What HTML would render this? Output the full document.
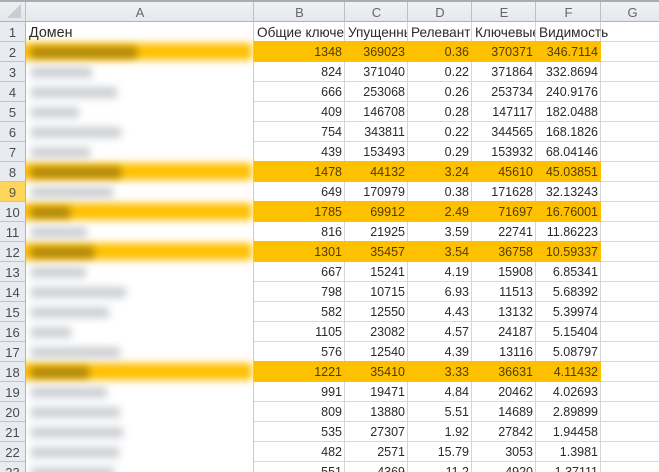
<!DOCTYPE html>
<html><head><meta charset="utf-8"><style>
html,body{margin:0;padding:0;background:#fff;width:659px;height:472px;overflow:hidden}
body{position:relative;font-family:"Liberation Sans",sans-serif;font-size:12.5px;color:#2a2a2a}
#top{position:absolute;left:0;top:0;width:659px;height:2px;background:#a9adb2}
#wrap{position:absolute;left:0;top:0;width:659px;height:472px;overflow:hidden}
table{position:absolute;left:0;top:2px;border-collapse:separate;border-spacing:0;table-layout:fixed;width:663px;filter:blur(.3px)}
tr{height:20px}
td,th{box-sizing:border-box;height:20px;padding:2px 2px 0 3px;border-right:1px solid #d6d6d6;border-bottom:1px solid #d9d9d9;white-space:nowrap;overflow:hidden;text-align:right;font-weight:normal;line-height:17px}
thead th{height:20px;background:linear-gradient(#eff2f5,#e4e8ec);border-right:1px solid #bcc0c5;border-bottom:1px solid #b0b4ba;text-align:center;color:#666;font-size:13px;line-height:17px}
th.r{background:#e8ecf1;border-right:1px solid #b0b4ba;border-bottom:1px solid #c0c4c9;text-align:center;color:#4a4a4a;font-size:13px;padding:2px 0 0}
th.s{background:#ffd55c;color:#555}
th.c{position:relative;background:linear-gradient(#eceff2,#e4e7eb)}
th.c i{position:absolute;right:4px;bottom:3px;width:0;height:0;border-left:14px solid transparent;border-bottom:14px solid #c9cdd2}
td.a{border-right:1px solid #c8ccd0;border-bottom:0;text-align:left;position:relative}
tr.o td{background:#ffc000;border-color:#ffc000;color:#523c00;box-shadow:0 -1px 0 #ffc000}
tr.o td.a{background:none;border-right-color:#c8ccd0;box-shadow:none}
.h td{text-align:left;font-size:13.6px}
.h td.a{font-size:14.3px}
.v{overflow:visible!important}
td.x,tr.o td.x{background:none;border-right:0;border-bottom:1px solid #d9d9d9;box-shadow:none}
#ov{position:absolute;left:26px;top:21px;width:228px;height:451px;overflow:hidden;pointer-events:none}
#ov b{position:absolute;display:block}
.bar{left:-12px;width:238px;height:17px;background:#ffc000;filter:blur(4px)}
.t{left:5px;height:11px;margin-top:-1px;background:#aeb3b9;filter:blur(4px);opacity:.62}
.d{background:#a07c10;opacity:.85}
</style></head><body>
<div id="wrap">
<div id="top"></div>
<table>
<colgroup><col style="width:26px"><col style="width:228px"><col style="width:91px"><col style="width:63px"><col style="width:64px"><col style="width:64px"><col style="width:65px"><col style="width:62px"></colgroup>
<thead><tr><th class="c"><i></i></th><th>A</th><th>B</th><th>C</th><th>D</th><th>E</th><th>F</th><th style="border-right:0">G</th></tr></thead>
<tbody>
<tr class="h"><th class="r">1</th><td class="a">Домен</td><td>Общие ключевые</td><td>Упущенные</td><td>Релевантность</td><td>Ключевые</td><td class="v">Видимость</td><td class="x"></td></tr>
<tr class="o"><th class="r">2</th><td class="a"></td><td>1348</td><td>369023</td><td>0.36</td><td>370371</td><td>346.7114</td><td class="x"></td></tr>
<tr><th class="r">3</th><td class="a"></td><td>824</td><td>371040</td><td>0.22</td><td>371864</td><td>332.8694</td><td class="x"></td></tr>
<tr><th class="r">4</th><td class="a"></td><td>666</td><td>253068</td><td>0.26</td><td>253734</td><td>240.9176</td><td class="x"></td></tr>
<tr><th class="r">5</th><td class="a"></td><td>409</td><td>146708</td><td>0.28</td><td>147117</td><td>182.0488</td><td class="x"></td></tr>
<tr><th class="r">6</th><td class="a"></td><td>754</td><td>343811</td><td>0.22</td><td>344565</td><td>168.1826</td><td class="x"></td></tr>
<tr><th class="r">7</th><td class="a"></td><td>439</td><td>153493</td><td>0.29</td><td>153932</td><td>68.04146</td><td class="x"></td></tr>
<tr class="o"><th class="r">8</th><td class="a"></td><td>1478</td><td>44132</td><td>3.24</td><td>45610</td><td>45.03851</td><td class="x"></td></tr>
<tr><th class="r s">9</th><td class="a"></td><td>649</td><td>170979</td><td>0.38</td><td>171628</td><td>32.13243</td><td class="x"></td></tr>
<tr class="o"><th class="r">10</th><td class="a"></td><td>1785</td><td>69912</td><td>2.49</td><td>71697</td><td>16.76001</td><td class="x"></td></tr>
<tr><th class="r">11</th><td class="a"></td><td>816</td><td>21925</td><td>3.59</td><td>22741</td><td>11.86223</td><td class="x"></td></tr>
<tr class="o"><th class="r">12</th><td class="a"></td><td>1301</td><td>35457</td><td>3.54</td><td>36758</td><td>10.59337</td><td class="x"></td></tr>
<tr><th class="r">13</th><td class="a"></td><td>667</td><td>15241</td><td>4.19</td><td>15908</td><td>6.85341</td><td class="x"></td></tr>
<tr><th class="r">14</th><td class="a"></td><td>798</td><td>10715</td><td>6.93</td><td>11513</td><td>5.68392</td><td class="x"></td></tr>
<tr><th class="r">15</th><td class="a"></td><td>582</td><td>12550</td><td>4.43</td><td>13132</td><td>5.39974</td><td class="x"></td></tr>
<tr><th class="r">16</th><td class="a"></td><td>1105</td><td>23082</td><td>4.57</td><td>24187</td><td>5.15404</td><td class="x"></td></tr>
<tr><th class="r">17</th><td class="a"></td><td>576</td><td>12540</td><td>4.39</td><td>13116</td><td>5.08797</td><td class="x"></td></tr>
<tr class="o"><th class="r">18</th><td class="a"></td><td>1221</td><td>35410</td><td>3.33</td><td>36631</td><td>4.11432</td><td class="x"></td></tr>
<tr><th class="r">19</th><td class="a"></td><td>991</td><td>19471</td><td>4.84</td><td>20462</td><td>4.02693</td><td class="x"></td></tr>
<tr><th class="r">20</th><td class="a"></td><td>809</td><td>13880</td><td>5.51</td><td>14689</td><td>2.89899</td><td class="x"></td></tr>
<tr><th class="r">21</th><td class="a"></td><td>535</td><td>27307</td><td>1.92</td><td>27842</td><td>1.94458</td><td class="x"></td></tr>
<tr><th class="r">22</th><td class="a"></td><td>482</td><td>2571</td><td>15.79</td><td>3053</td><td>1.3981</td><td class="x"></td></tr>
<tr><th class="r">23</th><td class="a"></td><td>551</td><td>4369</td><td>11.2</td><td>4920</td><td>1.37111</td><td class="x"></td></tr>
</tbody></table>
<div id="ov">
<b class="bar" style="top:22px"></b><b class="bar" style="top:142px"></b><b class="bar" style="top:182px"></b><b class="bar" style="top:222px"></b><b class="bar" style="top:342px"></b>
<b class="t d" style="top:27px;width:106px"></b>
<b class="t" style="top:47px;width:61px"></b>
<b class="t" style="top:67px;width:86px"></b>
<b class="t" style="top:87px;width:48px"></b>
<b class="t" style="top:107px;width:90px"></b>
<b class="t" style="top:127px;width:59px"></b>
<b class="t d" style="top:147px;width:90px"></b>
<b class="t" style="top:167px;width:82px"></b>
<b class="t d" style="top:187px;width:39px"></b>
<b class="t" style="top:207px;width:56px"></b>
<b class="t d" style="top:227px;width:63px"></b>
<b class="t" style="top:247px;width:55px"></b>
<b class="t" style="top:267px;width:95px"></b>
<b class="t" style="top:287px;width:78px"></b>
<b class="t" style="top:307px;width:40px"></b>
<b class="t" style="top:327px;width:89px"></b>
<b class="t d" style="top:347px;width:58px"></b>
<b class="t" style="top:367px;width:76px"></b>
<b class="t" style="top:387px;width:89px"></b>
<b class="t" style="top:407px;width:92px"></b>
<b class="t" style="top:427px;width:88px"></b>
<b class="t" style="top:447px;width:83px"></b>
</div>
</div>
</body></html>
